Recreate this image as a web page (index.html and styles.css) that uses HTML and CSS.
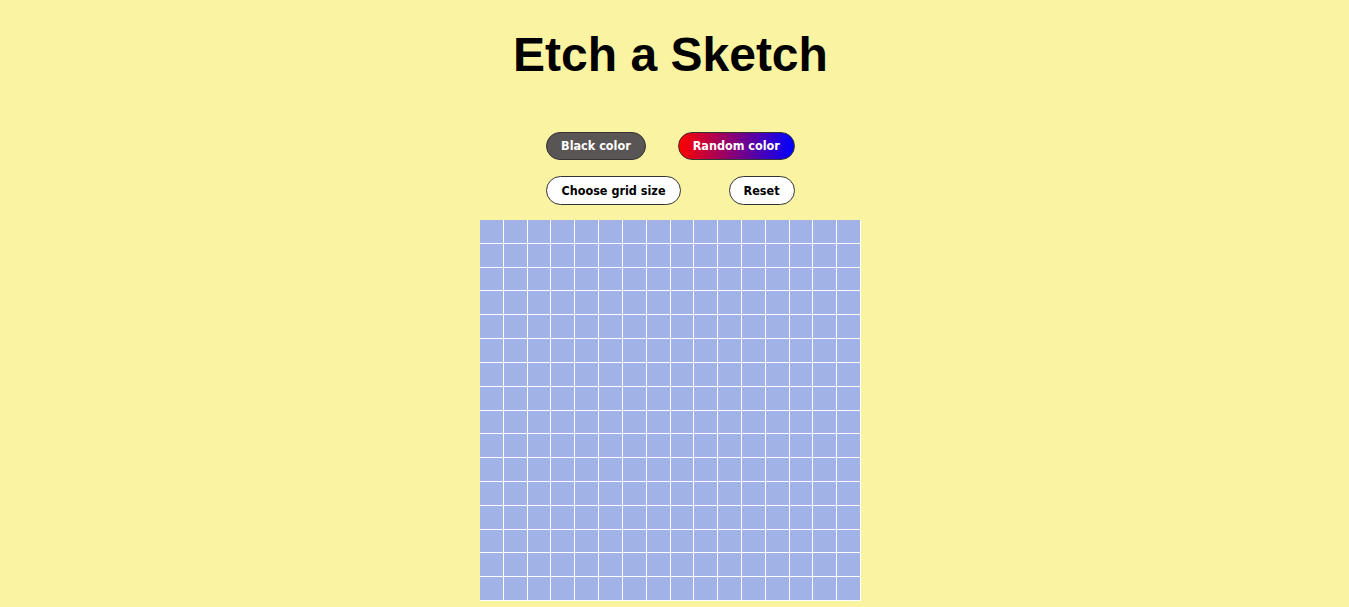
FILE: index.html
```html
<!DOCTYPE html>
<html>
<head>
<meta charset="utf-8">
<title>Etch a Sketch</title>
<link rel="stylesheet" href="styles.css">
</head>
<body>
<div class="page">
  <h1 class="title">Etch a Sketch</h1>
  <div class="controls">
    <div class="row row-color">
      <button class="btn btn-black">Black color</button>
      <button class="btn btn-random">Random color</button>
    </div>
    <div class="row row-grid">
      <button class="btn btn-light">Choose grid size</button>
      <button class="btn btn-light">Reset</button>
    </div>
  </div>
  <div class="board" id="board"></div>
</div>
<script>
  var b = document.getElementById('board');
  for (var i = 0; i < 256; i++) {
    var c = document.createElement('div');
    c.className = 'cell';
    b.appendChild(c);
  }
</script>
</body>
</html>
```

FILE: styles.css
```css
html, body {
  margin: 0;
  padding: 0;
  background: #faf3a1;
}
body {
  padding-right: 8px;
  overflow: hidden;
}
.page {
  display: flex;
  flex-direction: column;
  align-items: center;
}
.title {
  font-family: "Liberation Sans", Arial, sans-serif;
  font-weight: bold;
  font-size: 48px;
  line-height: 55px;
  margin: 27px 0 0;
  color: #000;
}
.controls {
  display: flex;
  flex-direction: column;
  align-items: center;
  gap: 16px;
  margin-top: 50px;
}
.row {
  display: flex;
  justify-content: center;
}
.row-color { gap: 32px; }
.row-grid { gap: 48px; }
.btn {
  font-family: "DejaVu Sans Condensed", "DejaVu Sans", sans-serif;
  font-weight: bold;
  font-size: 12.5px;
  line-height: 16px;
  padding: 5px 14px;
  border: 1px solid #333;
  border-radius: 15px;
  cursor: pointer;
}
.btn-black {
  background: #5a5555;
  color: #fff;
}
.btn-random {
  background: linear-gradient(to right, #ff0000, #0000ff);
  color: #fff;
}
.btn-light {
  background: #fff;
  color: #000;
  padding-top: 6px;
  padding-bottom: 5px;
}
.board {
  margin-top: 15px;
  width: 381px;
  height: 381px;
  display: grid;
  grid-template-columns: repeat(16, 1fr);
  grid-template-rows: repeat(16, 1fr);
}
.cell {
  background: #a0b2e6;
  border-right: 1px solid #fff;
  border-bottom: 1px solid #fff;
}
```
